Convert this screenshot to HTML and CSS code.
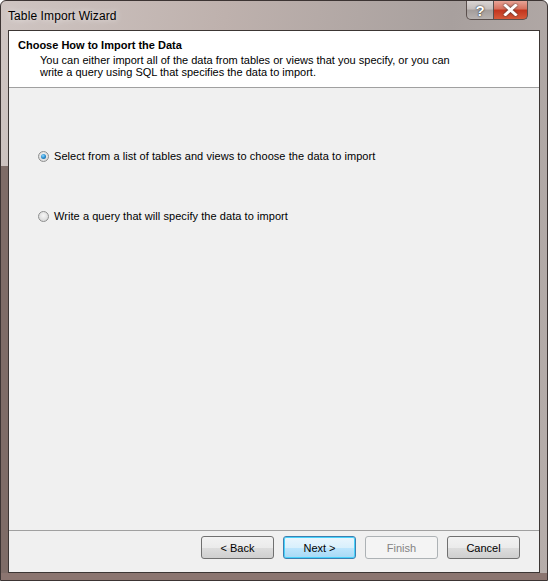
FILE: index.html
```html
<!DOCTYPE html>
<html>
<head>
<meta charset="utf-8">
<link rel="stylesheet" href="styles.css">
</head>
<body>
<div class="window">
  <div class="titlebar">
    <span class="title">Table Import Wizard</span>
    <div class="caption-buttons">
      <div class="cap help"><span>?</span></div>
      <div class="cap close">
        <svg width="15" height="12" viewBox="0 0 15 12"><path d="M2.5 1.5 L12.5 10.5 M12.5 1.5 L2.5 10.5" stroke="#fff" stroke-width="3" stroke-linecap="square"/></svg>
      </div>
    </div>
  </div>
  <div class="client">
    <div class="header">
      <div class="h-title">Choose How to Import the Data</div>
      <div class="h-desc">You can either import all of the data from tables or views that you specify, or you can<br>write a query using SQL that specifies the data to import.</div>
    </div>
    <div class="content">
      <label class="radio-row first"><span class="radio checked"></span><span>Select from a list of tables and views to choose the data to import</span></label>
      <label class="radio-row second"><span class="radio"></span><span>Write a query that will specify the data to import</span></label>
    </div>
    <div class="footer">
      <div class="btn">&lt; Back</div>
      <div class="btn default">Next &gt;</div>
      <div class="btn disabled">Finish</div>
      <div class="btn">Cancel</div>
    </div>
  </div>
</div>
</body>
</html>
```
FILE: styles.css
```css
html, body {
  margin: 0;
  padding: 0;
  background: #ffffff;
}
body {
  font-family: "Liberation Sans", Arial, sans-serif;
  font-size: 11px;
  color: #000;
}
.window {
  width: 548px;
  height: 581px;
  box-sizing: border-box;
  display: flex;
  flex-direction: column;
  padding: 0 7px 7px 7px;
  border: 1px solid #3c3433;
  border-radius: 6px 6px 0 0;
  background: linear-gradient(100deg, #cfc5c2 0%, #beb1ad 35%, #a8a09e 70%, #b7aeab 100%);
  position: relative;
  overflow: hidden;
}
.window::before {
  content: "";
  position: absolute;
  left: 0;
  top: 165px;
  width: 7px;
  bottom: 0;
  background: #7e6c67;
}
.window::after {
  content: "";
  position: absolute;
  left: 0;
  right: 0;
  bottom: 0;
  height: 7px;
  background: #8b7570;
}
.titlebar {
  height: 29px;
  display: flex;
  align-items: flex-start;
  justify-content: space-between;
}
.title {
  font-size: 12px;
  padding-top: 8px;
  color: #000;
  letter-spacing: 0.1px;
  text-shadow: 0 0 6px rgba(255,255,255,0.9);
}
.caption-buttons {
  display: flex;
  margin-right: 12px;
}
.cap {
  height: 19px;
  box-sizing: border-box;
  border: 1px solid #5a4f4d;
  border-top: none;
  display: flex;
  align-items: center;
  justify-content: center;
}
.help {
  width: 28px;
  border-radius: 0 0 0 5px;
  background: linear-gradient(#d9d4d3 0%, #c4bdbb 45%, #a39c9a 50%, #b8b2b0 100%);
}
.help span {
  font-weight: bold;
  font-size: 15px;
  line-height: 15px;
  color: #fff;
  text-shadow: 0 0 2px #333, 0 0 1px #333;
}
.close {
  width: 34px;
  border-left: none;
  border-radius: 0 0 5px 0;
  background: linear-gradient(#e8a497 0%, #d66f5c 45%, #c2341d 50%, #d65a3a 100%);
}
.close svg {
  filter: drop-shadow(0 0 1px #333);
}
.client {
  flex: 1;
  display: flex;
  flex-direction: column;
  background: #f0f0f0;
  border: 1px solid #3c3634;
  position: relative;
  z-index: 1;
}
.header {
  height: 57px;
  box-sizing: border-box;
  background: #fff;
  border-bottom: 1px solid #a0a0a0;
  padding: 7px 0 0 9px;
}
.h-title {
  font-weight: bold;
  font-size: 11px;
  line-height: 14px;
}
.h-desc {
  padding-left: 22px;
  margin-top: 2px;
  line-height: 12px;
  color: #000;
}
.content {
  flex: 1;
  display: flex;
  flex-direction: column;
  padding-left: 29px;
  letter-spacing: 0.06px;
}
.radio-row {
  display: flex;
  align-items: center;
  gap: 5px;
  height: 14px;
}
.radio-row.first {
  margin-top: 61px;
}
.radio-row.second {
  margin-top: 46px;
}
.radio {
  width: 11px;
  height: 11px;
  border-radius: 50%;
  border: 1px solid #8e8f8f;
  background: radial-gradient(circle at 50% 40%, #f6f6f6 0%, #dcdcdc 70%, #cfcfcf 100%);
  box-sizing: border-box;
  position: relative;
  flex: none;
}
.radio.checked::after {
  content: "";
  position: absolute;
  left: 2px;
  top: 2px;
  width: 5px;
  height: 5px;
  border-radius: 50%;
  background: radial-gradient(circle at 40% 35%, #8fd7ff 0%, #2a8fd0 50%, #0d4f86 100%);
}
.footer {
  height: 42px;
  box-sizing: border-box;
  border-top: 1px solid #a0a0a0;
  display: flex;
  justify-content: flex-end;
  align-items: flex-start;
  gap: 9px;
  padding: 5px 19px 0 0;
}
.btn {
  width: 73px;
  height: 23px;
  box-sizing: border-box;
  border: 1px solid #707070;
  border-radius: 3px;
  background: linear-gradient(#f2f2f2 0%, #ebebeb 50%, #dddddd 51%, #cfcfcf 100%);
  display: flex;
  align-items: center;
  justify-content: center;
  font-size: 11px;
}
.btn.default {
  border-color: #3c7fb1;
  background: linear-gradient(#eaf6fd 0%, #d9f0fc 50%, #bee6fd 51%, #a7d9f5 100%);
  box-shadow: inset 0 0 0 1px #48d2fb;
}
.btn.disabled {
  border-color: #adb2b5;
  background: #f4f4f4;
  color: #838383;
}
```
